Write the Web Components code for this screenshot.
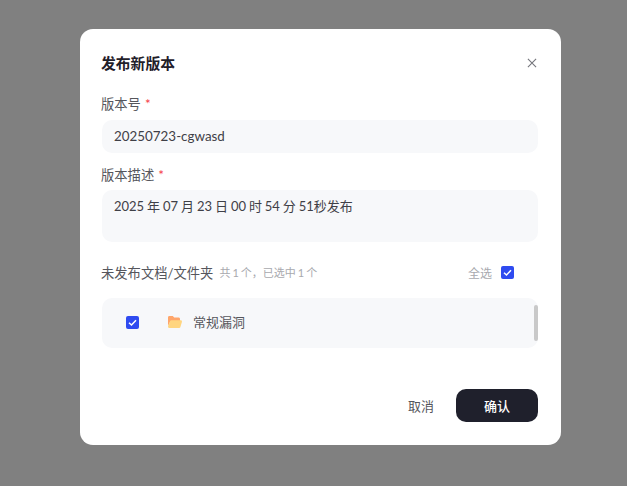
<!DOCTYPE html>
<html lang="zh">
<head>
<meta charset="utf-8">
<title>发布新版本</title>
<style>
  html, body { margin: 0; height: 100%; }
  body {
    background: #808080;
    font-family: Lato, "Noto Sans CJK SC", sans-serif;
    overflow: hidden;
  }
</style>
</head>
<body>
<template id="tpl-check">
  <style>
    :host { display: inline-flex; width: 13px; height: 13px; background: #2f4bf0; border-radius: 2px; align-items: center; justify-content: center; }
    svg { width: 11px; height: 11px; }
  </style>
  <svg viewBox="0 0 11 11" fill="none"><path d="M2 5.8 4.500 8 9 3.200" stroke="#fff" stroke-width="1.5"/></svg>
</template>

<template id="tpl-field">
  <style>
    :host { display: block; }
    .label { font-size: 13.3px; line-height: 20px; color: #55565c; display: block; }
    .label i { font-style: normal; color: #f5343f; margin-left: 4px; }
    .box {
      margin: var(--box-gap, 6px) 0 0 .5px;
      background: #f7f8fa;
      border-radius: 10px;
      padding: 6px 12.500px;
      font-size: 13.4px;
      line-height: 21px;
      color: #3f4047;
      box-sizing: border-box;
      height: var(--box-height, 33px);
    }
  </style>
  <span class="label"><span id="t"></span><i>*</i></span>
  <div class="box"><slot></slot></div>
</template>

<template id="tpl-dialog">
  <style>
    :host {
      display: flex; flex-direction: column;
      box-sizing: border-box;
      width: 481.5px; height: 416.5px;
      margin: 28.5px 0 0 79.5px;
      padding: 22.5px 23px 23px 21.5px;
      background: #fff;
      border-radius: 13px;
    }
    header { display: flex; justify-content: space-between; align-items: center; height: 24px; }
    h2 { margin: 0; font-size: 14.8px; font-weight: 700; color: #1f2029; line-height: 24px; }
    header svg { width: 10px; height: 10px; margin-right: 1px; }
    .fields { display: flex; flex-direction: column; gap: 12px; margin-top: 19px; }
    .desc { font-size: 13px; word-spacing: -0.4px; }
    .files { display: flex; align-items: center; height: 20px; margin-top: 20px; }
    .files b { font-weight: 400; font-size: 13.3px; color: #55565c; }
    .files small { font-size: 11px; word-spacing: -0.8px; color: #a8a9ae; margin-left: 6px; flex: 1; }
    .files span { font-size: 12px; color: #a8a9ae; margin-right: 9px; }
    .files my-check { margin-right: 24px; }
    .list {
      position: relative;
      box-sizing: border-box;
      margin: 16px 0 0 .5px; height: 50px; background: #f7f8fa; border-radius: 10px;
      display: flex; align-items: center; padding: 0 0 1.5px 24.500px;
      font-size: 13px; color: #55565c;
    }
    .list svg { width: 14px; height: 12px; margin: 0 11px 0 29px; }
    .list span { margin-bottom: 2px; }
    .bar { position: absolute; right: 0; top: 7px; width: 4px; height: 36px; background: #c9c9c9; border-radius: 2px; }
    footer { margin-top: auto; display: flex; justify-content: flex-end; align-items: center; gap: 22px; }
    button { font: inherit; font-size: 13px; border: 0; background: none; color: #55565c; padding: 0; }
    button.ok { width: 82px; height: 33px; background: #1f202c; color: #fff; border-radius: 10px; font-weight: 500; }
  </style>
  <header>
    <h2>发布新版本</h2>
    <svg viewBox="0 0 11 11" fill="none"><path d="M1 1 10 10M10 1 1 10" stroke="#75767c" stroke-width="1.2"/></svg>
  </header>
  <div class="fields">
    <my-field label="版本号">20250723-cgwasd</my-field>
    <my-field label="版本描述" style="--box-height:52px;--box-gap:5px"><span class="desc">2025 年 07 月 23 日 00 时 54 分 51秒发布</span></my-field>
  </div>
  <div class="files">
    <b>未发布文档/文件夹</b>
    <small>共 1 个，已选中 1 个</small>
    <span>全选</span>
    <my-check></my-check>
  </div>
  <div class="list">
    <my-check></my-check>
    <svg viewBox="0 0 14 12">
      <path d="M0 1.400C0 .6.6 0 1.400 0h3.400l1.400 1.600h4.400c.8 0 1.400.6 1.400 1.400v2H2.500L0 10z" fill="#ffa66b"/>
      <path d="M0 10.500 2 5.200C2.200 4.600 2.700 4.300 3.300 4.300h9.300c.9 0 1.600.8 1.300 1.600l-1.500 5c-.2.7-.8 1.100-1.400 1.100H1.400C.6 12 0 11.300 0 10.500z" fill="#ffd57f"/>
    </svg>
    <span>常规漏洞</span>
    <div class="bar"></div>
  </div>
  <footer>
    <button>取消</button>
    <button class="ok">确认</button>
  </footer>
</template>

<my-dialog></my-dialog>

<script>
  function fromTemplate(el, id) {
    const root = el.attachShadow({ mode: 'open' });
    root.appendChild(document.getElementById(id).content.cloneNode(true));
    return root;
  }

  class MyCheck extends HTMLElement {
    constructor() { super(); fromTemplate(this, 'tpl-check'); }
  }
  class MyField extends HTMLElement {
    constructor() { super(); this.root = fromTemplate(this, 'tpl-field'); }
    connectedCallback() {
      this.root.getElementById('t').textContent = this.getAttribute('label');
    }
  }
  class MyDialog extends HTMLElement {
    constructor() { super(); fromTemplate(this, 'tpl-dialog'); }
  }

  customElements.define('my-check', MyCheck);
  customElements.define('my-field', MyField);
  customElements.define('my-dialog', MyDialog);
</script>
</body>
</html>
